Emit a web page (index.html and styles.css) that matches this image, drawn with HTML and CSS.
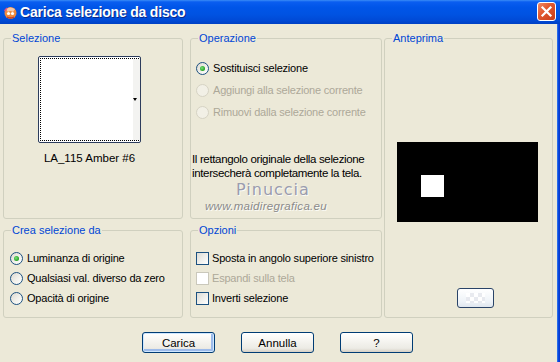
FILE: index.html
```html
<!DOCTYPE html>
<html lang="it">
<head>
<meta charset="utf-8">
<title>Carica selezione da disco</title>
<link rel="stylesheet" href="styles.css">
</head>
<body>
<div class="window">
  <div class="titlebar">
    <svg class="app-icon" width="15" height="15" viewBox="0 0 15 15">
      <circle cx="7.5" cy="8" r="6" fill="#f08a3c"/>
      <path d="M3 4 Q7 1 12 4 L10 7 Q7 5 5 7 Z" fill="#f4c9a8"/>
      <circle cx="5.5" cy="8.5" r="1.6" fill="#fff"/>
      <circle cx="9.5" cy="8.5" r="1.6" fill="#fff"/>
      <path d="M4 12 Q7.5 14 11 12" stroke="#c0392b" stroke-width="1.3" fill="none"/>
      <path d="M1.5 6 L4 3" stroke="#d94f8a" stroke-width="1.5"/>
    </svg>
    <span class="title">Carica selezione da disco</span>
    <span class="close-btn">
      <svg width="13" height="13" viewBox="0 0 13 13"><path d="M2.5 2.5 L10.5 10.5 M10.5 2.5 L2.5 10.5" stroke="#fff" stroke-width="2.2" stroke-linecap="square"/></svg>
    </span>
  </div>
  <div class="frame">
    <div class="client">
      <div class="groups">
        <fieldset class="group g-sel">
          <legend>Selezione</legend>
          <div class="sel-col">
            <div class="thumb">
              <div class="thumb-inner">
                <span class="thumb-strip"></span>
                <span class="thumb-arrow"></span>
              </div>
            </div>
            <div class="thumb-label">LA_115 Amber #6</div>
          </div>
        </fieldset>

        <fieldset class="group g-op">
          <legend>Operazione</legend>
          <div class="op-list">
            <div class="opt op-row"><span class="radio checked"></span>Sostituisci selezione</div>
            <div class="opt op-row disabled"><span class="radio"></span>Aggiungi alla selezione corrente</div>
            <div class="opt op-row disabled"><span class="radio"></span>Rimuovi dalla selezione corrente</div>
          </div>
          <p class="note">Il rettangolo originale della selezione<br>intersecherà completamente la tela.</p>
          <div class="wm-name">Pinuccia</div>
          <div class="wm-url">www.maidiregrafica.eu</div>
        </fieldset>

        <fieldset class="group g-prev">
          <legend>Anteprima</legend>
          <div class="preview"><span class="preview-sel"></span></div>
          <span class="mini-btn"><span class="mini-pattern"></span></span>
        </fieldset>

        <fieldset class="group g-crea">
          <legend>Crea selezione da</legend>
          <div class="crea-list">
            <div class="opt crea-row"><span class="radio checked"></span>Luminanza di origine</div>
            <div class="opt crea-row"><span class="radio"></span>Qualsiasi val. diverso da zero</div>
            <div class="opt crea-row"><span class="radio"></span>Opacità di origine</div>
          </div>
        </fieldset>

        <fieldset class="group g-opz">
          <legend>Opzioni</legend>
          <div class="opz-list">
            <div class="opt crea-row"><span class="check"></span>Sposta in angolo superiore sinistro</div>
            <div class="opt crea-row disabled"><span class="check"></span>Espandi sulla tela</div>
            <div class="opt crea-row"><span class="check"></span>Inverti selezione</div>
          </div>
        </fieldset>
      </div>
      <div class="buttons">
        <span class="btn default">Carica</span>
        <span class="btn">Annulla</span>
        <span class="btn">?</span>
      </div>
    </div>
    <div class="frame-right"></div>
  </div>
</div>
</body>
</html>
```
FILE: styles.css
```css
html, body {
  margin: 0;
  padding: 0;
}
body {
  width: 560px;
  height: 362px;
  overflow: hidden;
  font-family: "Liberation Sans", Arial, sans-serif;
  font-size: 11px;
  color: #000;
  background: #ece9d8;
}
.window {
  display: flex;
  flex-direction: column;
  width: 560px;
  height: 362px;
}
.titlebar {
  height: 24px;
  flex: none;
  display: flex;
  align-items: center;
  background: linear-gradient(to bottom, #3a8cf6 0%, #0a5ef0 8%, #0055e8 30%, #0053e2 60%, #004ad6 85%, #0041c4 100%);
  color: #fff;
  padding-left: 3px;
}
.app-icon {
  flex: none;
  margin-right: 2px;
  margin-top: 1px;
}
.title {
  font-weight: bold;
  font-size: 14px;
  letter-spacing: -0.2px;
  text-shadow: 1px 1px 0 #0a2a8a;
  flex: 1;
}
.close-btn {
  width: 19px;
  height: 19px;
  box-sizing: border-box;
  border: 1px solid #fff;
  border-radius: 3px;
  background: linear-gradient(135deg, #f08a68 0%, #e25a30 40%, #c83c18 100%);
  display: flex;
  align-items: center;
  justify-content: center;
  margin-right: 4px;
  margin-top: -1px;
}
.frame {
  flex: 1;
  display: flex;
}
.client {
  flex: 1;
  background: #ece9d8;
}
.frame-right {
  width: 3px;
  background: linear-gradient(to right, #3a7cf0, #0848dc, #0831c8);
}
.groups {
  display: grid;
  grid-template-columns: 180px 7px 192px 2px 169px;
  grid-template-rows: 187px 94px;
  row-gap: 5px;
  padding: 8px 0 0 3px;
}
.group {
  margin: 0;
  padding: 0;
  min-width: 0;
  border: 1px solid #d0d0bf;
  border-radius: 3px;
  box-sizing: border-box;
}
.group legend {
  color: #0046d5;
  font-size: 11px;
  line-height: 13px;
  padding: 0 1px;
  margin-left: 7px;
}
.g-sel { grid-column: 1; grid-row: 1; }
.g-op { grid-column: 3; grid-row: 1; }
.g-prev { grid-column: 5; grid-row: 1 / span 2; }
.g-crea { grid-column: 1; grid-row: 2; }
.g-opz { grid-column: 3; grid-row: 2; }

/* Selezione */
.sel-col {
  width: 103px;
  margin-left: 34px;
  padding-top: 11px;
}
.thumb {
  width: 103px;
  height: 87px;
  box-sizing: border-box;
  border: 1px solid #2c3c5c;
  border-radius: 2px;
  background: #fff;
  padding: 1px;
}
.thumb-inner {
  height: 100%;
  box-sizing: border-box;
  border: 1px dotted #000;
  display: flex;
  justify-content: flex-end;
  align-items: center;
}
.thumb-strip {
  align-self: stretch;
  width: 7px;
  background: #f3f3f1;
  margin-right: -1px;
}
.thumb-arrow {
  width: 0;
  height: 0;
  border-left: 2.5px solid transparent;
  border-right: 2.5px solid transparent;
  border-top: 3px solid #000;
  margin-left: -6px;
  margin-right: 1px;
}
.thumb-label {
  text-align: center;
  line-height: 13px;
  margin-top: 9px;
  font-size: 11.5px;
}

/* option rows */
.opt {
  display: flex;
  align-items: center;
  white-space: nowrap;
  letter-spacing: -0.2px;
}
.opt.disabled {
  color: #aca899;
}
.op-list {
  padding: 12px 0 0 5px;
}
.op-row {
  height: 22px;
}
.crea-list {
  padding: 11px 0 0 6px;
}
.opz-list {
  padding: 11px 0 0 5px;
}
.crea-row {
  height: 20px;
}
.radio {
  flex: none;
  width: 13px;
  height: 13px;
  box-sizing: border-box;
  border: 1px solid #1c5180;
  border-radius: 50%;
  background: linear-gradient(135deg, #dcd9d0 0%, #f2f1ec 55%, #ffffff 100%);
  margin-right: 4px;
  display: flex;
  align-items: center;
  justify-content: center;
}
.radio.checked::after {
  content: "";
  width: 5px;
  height: 5px;
  border-radius: 50%;
  background: radial-gradient(circle at 40% 40%, #7be07b, #21a121 70%);
}
.disabled .radio {
  border-color: #d6d3c4;
  background: #f2f0e6;
}
.check {
  flex: none;
  width: 13px;
  height: 13px;
  box-sizing: border-box;
  border: 1px solid #1c5180;
  background: linear-gradient(135deg, #dcdcd7 0%, #f0f0ec 55%, #ffffff 100%);
  margin-right: 3px;
}
.disabled .check {
  border-color: #cac8bb;
  background: #fff;
}

/* note & watermark */
.note {
  margin: 29px 0 0 1px;
  line-height: 14px;
  font-size: 11.5px;
  letter-spacing: -0.35px;
}
.wm-name {
  margin-left: 45px;
  height: 20px;
  line-height: 20px;
  font-family: "DejaVu Sans", sans-serif;
  font-size: 16px;
  letter-spacing: 1px;
  color: #9a9cae;
  text-shadow: 1px 1px 0 #fbfbf6;
}
.wm-url {
  margin-left: 14px;
  height: 12px;
  line-height: 12px;
  font-style: italic;
  font-size: 11.5px;
  letter-spacing: 0.3px;
  color: #8a8a8a;
  text-shadow: 1px 1px 0 #fbfbf6;
}

/* Anteprima */
.preview {
  width: 141px;
  height: 80px;
  margin: 97px 0 0 12px;
  background: #000;
  padding: 33px 0 0 24px;
  box-sizing: border-box;
}
.preview-sel {
  display: block;
  width: 23px;
  height: 22px;
  background: #fff;
}
.mini-btn {
  display: block;
  width: 37px;
  height: 20px;
  box-sizing: border-box;
  margin: 66px 0 0 72px;
  border: 1px solid #2a4468;
  border-radius: 3px;
  background: linear-gradient(to bottom, #ffffff, #eef3f8 70%, #dfe6ee);
  padding: 4px 8px;
}
.mini-pattern {
  display: block;
  width: 100%;
  height: 100%;
  background-image: conic-gradient(#e6e8ee 25%, #ffffff 0 50%, #e6e8ee 0 75%, #ffffff 0);
  background-size: 8px 8px;
  opacity: 0.9;
}

/* buttons */
.buttons {
  display: flex;
  gap: 26px;
  padding-left: 142px;
  margin-top: 14px;
}
.btn {
  width: 73px;
  height: 21px;
  box-sizing: border-box;
  border: 1px solid #003c74;
  border-radius: 3px;
  background: linear-gradient(to bottom, #ffffff 0%, #f6f5f1 40%, #ecebe5 80%, #d6d0c5 100%);
  display: flex;
  align-items: center;
  justify-content: center;
  font-size: 11.5px;
}
.btn.default {
  box-shadow: inset 0 0 0 1px #cee7ff, inset -1px -1px 0 2px #9dbbea;
}
```
